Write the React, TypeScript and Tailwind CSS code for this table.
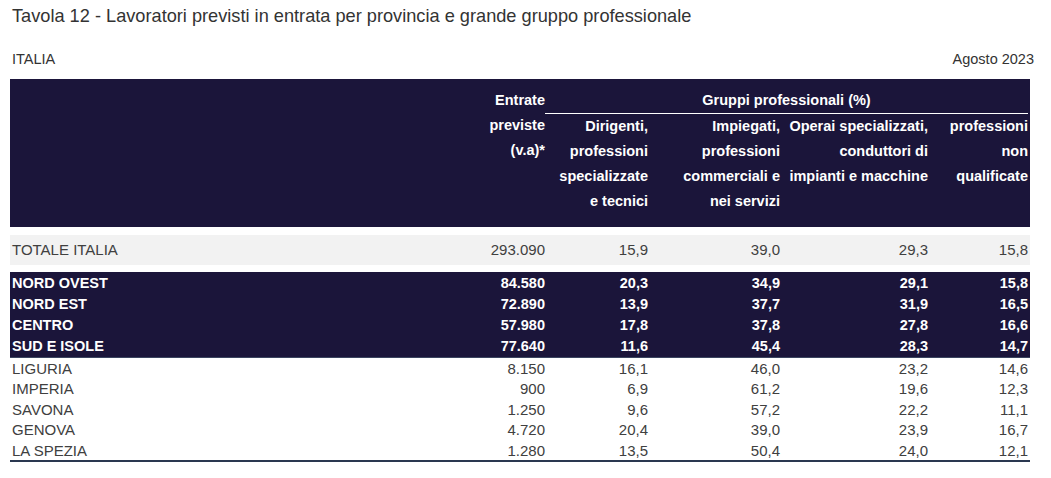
import React from 'react';

const macro = [
  { name: 'NORD OVEST', v: ['84.580', '20,3', '34,9', '29,1', '15,8'] },
  { name: 'NORD EST', v: ['72.890', '13,9', '37,7', '31,9', '16,5'] },
  { name: 'CENTRO', v: ['57.980', '17,8', '37,8', '27,8', '16,6'] },
  { name: 'SUD E ISOLE', v: ['77.640', '11,6', '45,4', '28,3', '14,7'] },
];

const province = [
  { name: 'LIGURIA', v: ['8.150', '16,1', '46,0', '23,2', '14,6'] },
  { name: 'IMPERIA', v: ['900', '6,9', '61,2', '19,6', '12,3'] },
  { name: 'SAVONA', v: ['1.250', '9,6', '57,2', '22,2', '11,1'] },
  { name: 'GENOVA', v: ['4.720', '20,4', '39,0', '23,9', '16,7'] },
  { name: 'LA SPEZIA', v: ['1.280', '13,5', '50,4', '24,0', '12,1'] },
];

const cols = 'grid grid-cols-[1fr_100px_103px_132px_148px_100px] pl-[2px] pr-[2px]';

const Row = ({ name, v, className }: { name: string; v: string[]; className: string }) => (
  <div className={`${cols} items-center ${className}`}>
    <div>{name}</div>
    {v.map((x, i) => (
      <div key={i} className="text-right">{x}</div>
    ))}
  </div>
);

export default function App() {
  return (
    <div className="w-[1051px] h-[478px] bg-white overflow-hidden font-['Liberation_Sans',Arial,sans-serif] text-[#3a3a3a]">
      <div className="pl-[12px] pt-[5px] text-[18.2px] leading-[22px] text-[#333]">
        Tavola 12 - Lavoratori previsti in entrata per provincia e grande gruppo professionale
      </div>
      <div className="flex justify-between pl-[12px] pr-[17px] mt-[23px] text-[14.5px] leading-[18px] text-[#333]">
        <span>ITALIA</span>
        <span>Agosto 2023</span>
      </div>

      <div className="ml-[10px] w-[1020px] mt-[11px]">
        {/* header */}
        <div className="bg-[#1b153a] text-white font-bold text-[14.5px] leading-[25px] pt-[9px] pb-[12px] h-[148px] flex pr-[2px]">
          <div className="flex-1" />
          <div className="w-[100px] text-right">
            <div>Entrate</div>
            <div>previste</div>
            <div>(v.a)*</div>
          </div>
          <div className="w-[483px]">
            <div className="text-center border-b border-white">Gruppi professionali (%)</div>
            <div className="grid grid-cols-[103px_132px_148px_100px] text-right">
              <div>
                <div>Dirigenti,</div>
                <div>professioni</div>
                <div>specializzate</div>
                <div>e tecnici</div>
              </div>
              <div>
                <div>Impiegati,</div>
                <div>professioni</div>
                <div>commerciali e</div>
                <div>nei servizi</div>
              </div>
              <div>
                <div>Operai specializzati,</div>
                <div>conduttori di</div>
                <div>impianti e macchine</div>
              </div>
              <div>
                <div>professioni</div>
                <div>non</div>
                <div>qualificate</div>
              </div>
            </div>
          </div>
        </div>

        {/* totale */}
        <Row
          name="TOTALE ITALIA"
          v={['293.090', '15,9', '39,0', '29,3', '15,8']}
          className="mt-[8px] h-[30px] bg-[#f2f2f2] text-[15px] text-[#404040]"
        />

        {/* macro areas */}
        <div className="mt-[7px] bg-[#1b153a] text-white font-bold text-[14.5px] pt-[0.5px] border-b border-[#3b4560]">
          {macro.map((r) => (
            <Row key={r.name} name={r.name} v={r.v} className="h-[21px]" />
          ))}
        </div>

        {/* province */}
        <div className="border-b-[2px] border-[#2a3850] text-[15px] text-[#404040]">
          {province.map((r) => (
            <Row key={r.name} name={r.name} v={r.v} className="h-[20.6px]" />
          ))}
        </div>
      </div>
    </div>
  );
}
